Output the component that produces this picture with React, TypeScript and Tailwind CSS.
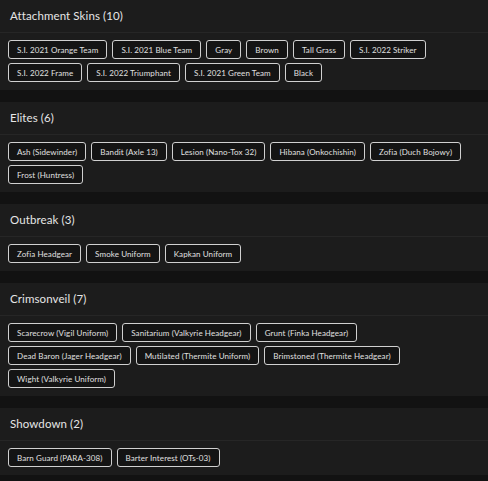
const SECTIONS = [
  {
    title: "Attachment Skins (10)",
    items: [
      "S.I. 2021 Orange Team",
      "S.I. 2021 Blue Team",
      "Gray",
      "Brown",
      "Tall Grass",
      "S.I. 2022 Striker",
      "S.I. 2022 Frame",
      "S.I. 2022 Triumphant",
      "S.I. 2021 Green Team",
      "Black",
    ],
  },
  {
    title: "Elites (6)",
    items: [
      "Ash (Sidewinder)",
      "Bandit (Axle 13)",
      "Lesion (Nano-Tox 32)",
      "Hibana (Onkochishin)",
      "Zofia (Duch Bojowy)",
      "Frost (Huntress)",
    ],
  },
  {
    title: "Outbreak (3)",
    items: ["Zofia Headgear", "Smoke Uniform", "Kapkan Uniform"],
  },
  {
    title: "Crimsonveil (7)",
    items: [
      "Scarecrow (Vigil Uniform)",
      "Sanitarium (Valkyrie Headgear)",
      "Grunt (Finka Headgear)",
      "Dead Baron (Jager Headgear)",
      "Mutilated (Thermite Uniform)",
      "Brimstoned (Thermite Headgear)",
      "Wight (Valkyrie Uniform)",
    ],
  },
  {
    title: "Showdown (2)",
    items: ["Barn Guard (PARA-308)", "Barter Interest (OTs-03)"],
  },
];

export default function App() {
  return (
    <div
      className="min-h-screen bg-[#121212] flex flex-col gap-3"
      style={{ fontFamily: "Lato, 'Open Sans', sans-serif" }}
    >
      {SECTIONS.map((section) => (
        <div key={section.title} className="bg-[#1c1c1c]">
          {/* Header */}
          <div className="h-[33px] px-[10px] flex items-center border-b border-[#262626]">
            <h2 className="text-[11.5px] text-[#e6e6e6] font-normal tracking-[0.1px]">{section.title}</h2>
          </div>

          {/* Items */}
          <div className="px-2 pt-[7px] pb-2 flex flex-wrap gap-x-[5px] gap-y-[4px]">
            {section.items.map((item) => (
              <span
                key={item}
                className="h-[19px] px-[8px] flex items-center rounded-[3px] border border-[#d0d0d0] bg-[#141414] text-[8px] text-[#e0e0e0] tracking-[0.1px]"
              >
                {item}
              </span>
            ))}
          </div>
        </div>
      ))}
    </div>
  );
}
